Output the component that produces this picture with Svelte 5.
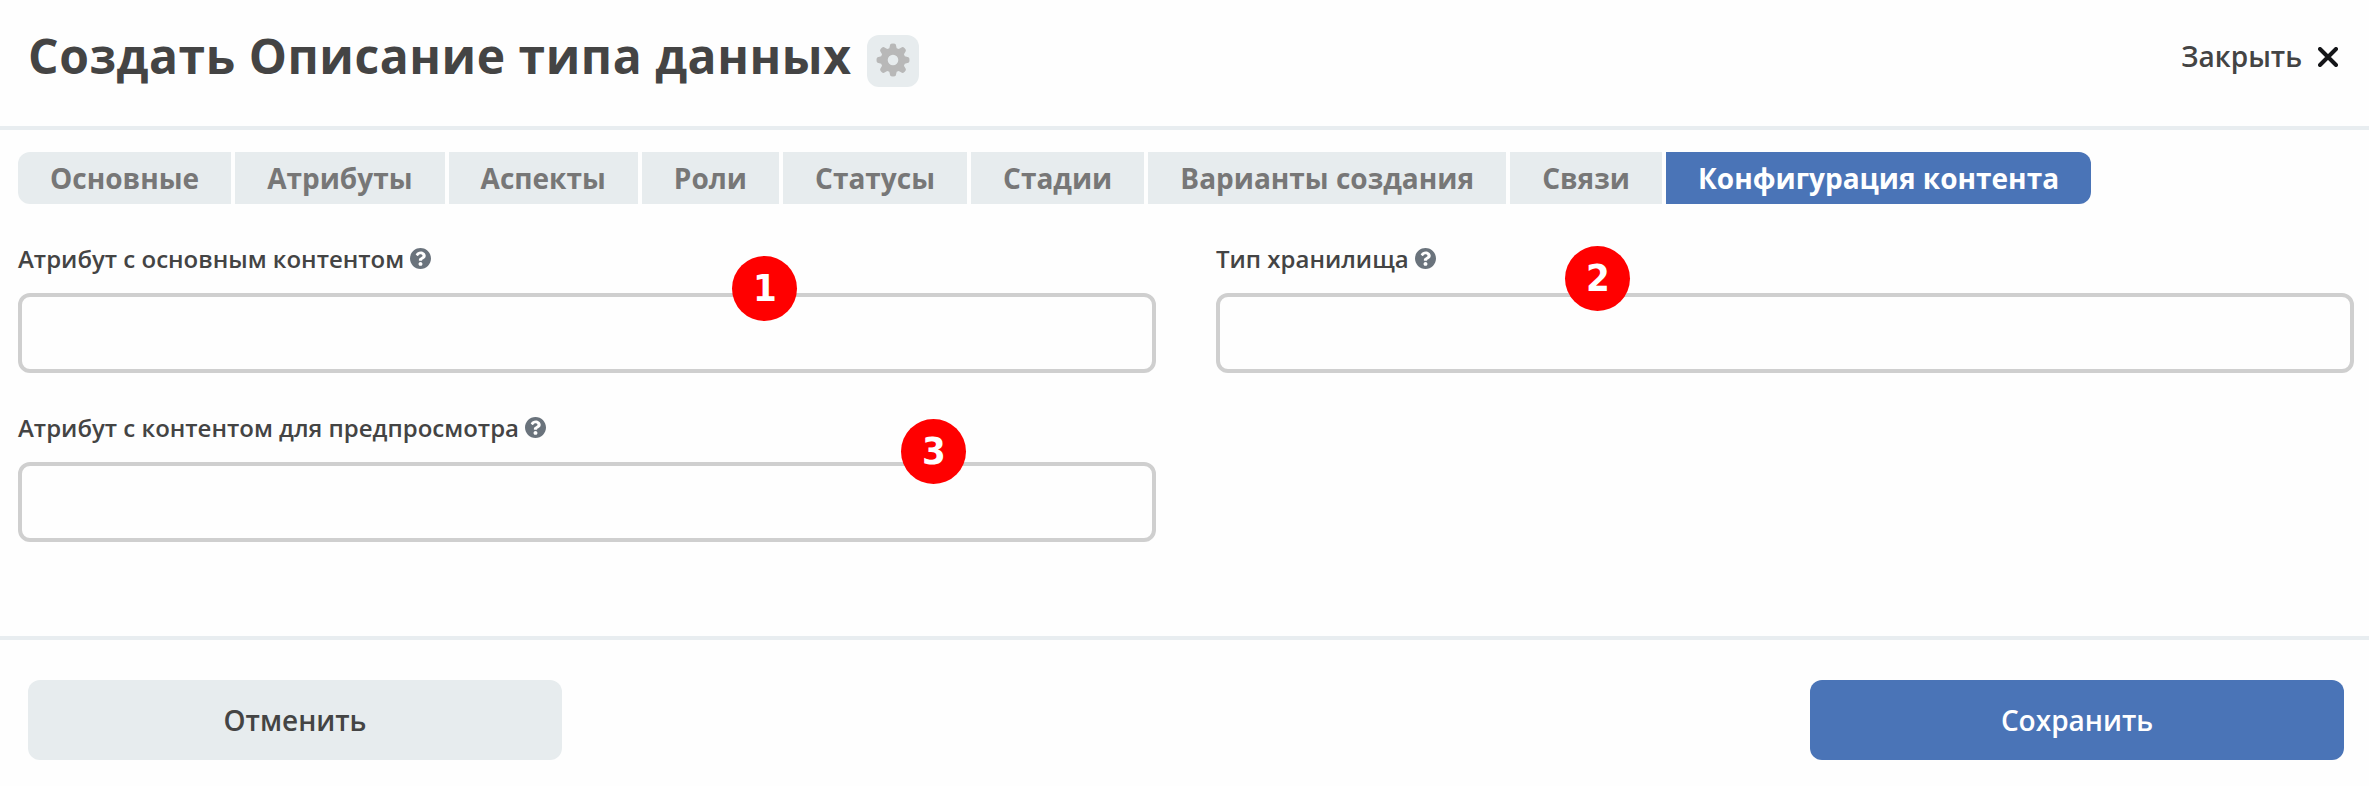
<script>
  const tabs = ['Основные', 'Атрибуты', 'Аспекты', 'Роли', 'Статусы', 'Стадии', 'Варианты создания', 'Связи', 'Конфигурация контента'];
  const active = 'Конфигурация контента';
  const fields = [
    { label: 'Атрибут с основным контентом', mark: '1', x: 714, y: -37 },
    { label: 'Тип хранилища', mark: '2', x: 349, y: -47 },
    { label: 'Атрибут с контентом для предпросмотра', mark: '3', x: 883, y: -43 }
  ];
</script>

<div class="dialog">
  <header>
    <h1>Создать Описание типа данных</h1>
    <button class="gear" aria-label="Настройки">
      <svg width="34" height="34" viewBox="0 0 34 34">
        <path fill="#b8b8b8" fill-rule="evenodd" d="M14.2 1.6Q14.5.5 17 .5t2.800 1.100l.9 3.600 2 .85 3.200-1.900q1.200-.5 2.800 1.150t1.150 2.800l-1.900 3.200.85 2 3.600.9q1.100.3 1.100 2.800t-1.100 2.800l-3.600.9-.85 2 1.900 3.200q.5 1.200-1.150 2.800t-2.800 1.150l-3.200-1.900-2 .85-.9 3.600q-.3 1.100-2.800 1.100t-2.800-1.100l-.9-3.600-2-.85-3.200 1.900q-1.200.5-2.800-1.150t-1.150-2.800l1.900-3.200-.85-2-3.600-.9Q.5 19.500.5 17t1.100-2.800l3.600-.9.85-2-1.900-3.200q-.5-1.200 1.150-2.800t2.800-1.150l3.200 1.900 2-.85zM17 11.700a5.300 5.300 0 1 0 0 10.600a5.300 5.300 0 1 0 0-10.600z" />
      </svg>
    </button>
    <button class="close">
      <span>Закрыть</span>
      <svg width="20" height="20" viewBox="0 0 20 20"><path d="M2 2 18 18M18 2 2 18" stroke="#141518" stroke-width="4" stroke-linecap="round" /></svg>
    </button>
  </header>

  <main>
    <nav>
      {#each tabs as tab}
        <button class="tab" class:active={tab === active}>{tab}</button>
      {/each}
    </nav>
    <div class="fields">
      {#each fields as field}
        <div class="field">
          <div class="label">
            <span>{field.label}</span>
            <svg width="21" height="21" viewBox="8 8 496 496">
              <path fill="#6a737c" d="M504 256c0 136.997-111.043 248-248 248S8 392.997 8 256C8 119.083 119.043 8 256 8s248 111.083 248 248zM262.655 90c-54.497 0-89.255 22.957-116.549 63.758-3.536 5.286-2.353 12.415 2.715 16.258l34.699 26.310c5.205 3.947 12.621 3.008 16.665-2.122 17.864-22.658 30.113-35.797 57.303-35.797 20.429 0 45.698 13.148 45.698 32.958 0 14.976-12.363 22.667-32.534 33.976C247.128 238.528 216 254.941 216 296v4c0 6.627 5.373 12 12 12h56c6.627 0 12-5.373 12-12v-1.333c0-28.462 83.186-29.647 83.186-106.667 0-58.002-60.165-102-116.531-102zM256 338c-25.365 0-46 20.635-46 46 0 25.364 20.635 46 46 46s46-20.636 46-46c0-25.365-20.635-46-46-46z" />
            </svg>
          </div>
          <div class="control">
            <input type="text" aria-label={field.label} />
            <span class="mark" style="left: {field.x}px; top: {field.y}px">{field.mark}</span>
          </div>
        </div>
      {/each}
    </div>
  </main>

  <footer>
    <button class="action">Отменить</button>
    <button class="action primary">Сохранить</button>
  </footer>
</div>

<style>
  :global(body) { background: #fefefe; }
  .dialog {
    height: 786px;
    display: flex;
    flex-direction: column;
    font-family: "Open Sans", "Noto Sans", sans-serif;
    color: #444;
  }
  button { font: inherit; color: inherit; border: 0; padding: 0; background: none; white-space: nowrap; }
  svg { display: block; flex: none; }
  header {
    box-sizing: border-box;
    height: 130px;
    display: flex;
    align-items: flex-start;
    padding: 0 31px 0 28px;
    border-bottom: 4px solid #e8edf0;
  }
  h1 { margin: 23px 0 0; font-size: 48px; line-height: 66px; font-weight: 700; letter-spacing: 0.55px; white-space: nowrap; }
  .gear {
    width: 52px;
    height: 52px;
    margin: 35px 0 0 16px;
    padding: 7px 9px 9px;
    border-radius: 12px;
    background: #e7ecee;
  }
  .close { display: flex; align-items: center; gap: 16px; margin: 37px 0 0 auto; height: 40px; font-size: 28px; font-weight: 600; }
  .close span { margin-top: -2px; }
  main { flex: 1; padding: 22px 15px 0 18px; }
  nav { display: flex; gap: 4.1px; }
  .tab {
    height: 52px;
    padding: 0 32px;
    background: #e7ecee;
    color: #777;
    font-size: 28px;
    line-height: 52px;
    font-weight: 700;
  }
  .tab:first-child { border-radius: 12px 0 0 12px; }
  .tab:last-child { border-radius: 0 12px 12px 0; }
  .tab.active { background: #4a74b7; color: #fff; }
  .fields { display: grid; grid-template-columns: 1fr 1fr; column-gap: 60px; row-gap: 38px; padding-top: 38px; }
  .label { display: flex; align-items: center; gap: 6px; height: 33px; font-size: 24px; line-height: 33px; font-weight: 600; }
  .control { position: relative; margin-top: 18px; height: 80px; }
  input {
    display: block;
    box-sizing: border-box;
    width: 100%;
    height: 80px;
    border: 4px solid #cfcfcf;
    border-radius: 12px;
    background: #fefefe;
    padding: 0 20px;
    font: 600 28px "Open Sans", sans-serif;
  }
  .mark {
    position: absolute;
    width: 65px;
    height: 65px;
    border-radius: 50%;
    background: #f00;
    color: #fff;
    text-align: center;
    text-indent: 1px;
    font: 700 38px/65px "DejaVu Sans Condensed", "DejaVu Sans", sans-serif;
    font-stretch: condensed;
  }
  footer {
    box-sizing: border-box;
    height: 150px;
    display: flex;
    justify-content: space-between;
    padding: 40px 25px 0 28px;
    border-top: 4px solid #e8edf0;
  }
  .action { width: 534px; height: 80px; border-radius: 12px; background: #e7ecee; font-size: 28px; font-weight: 600; }
  .action.primary { background: #4a74b7; color: #fff; }
</style>
